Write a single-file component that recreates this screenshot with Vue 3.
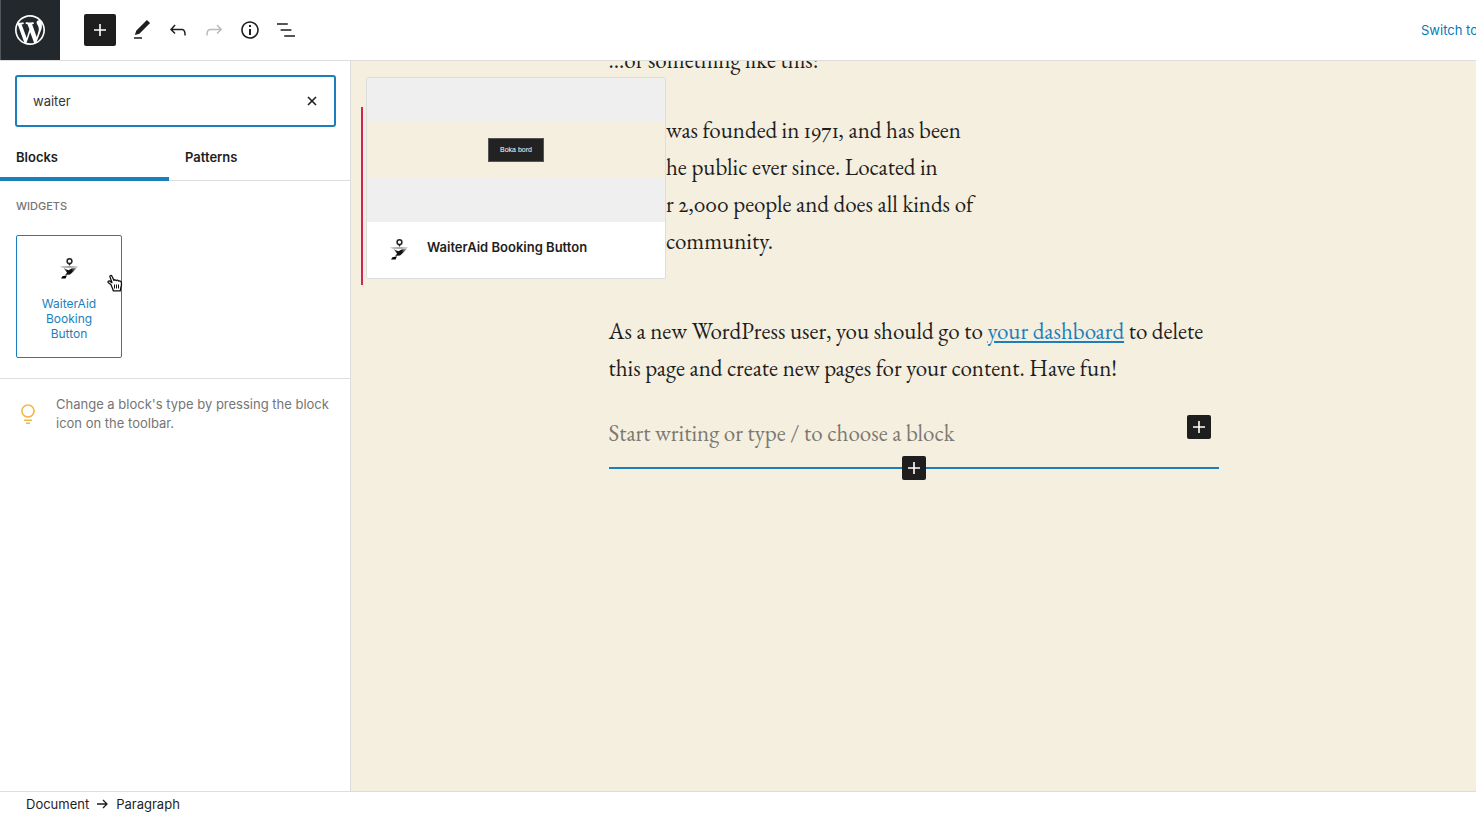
<script setup>
import { ref } from 'vue'

const query = ref('waiter')

const tools = [
  { label: 'Edit', d: 'M20.1 5.1L16.9 2 6.2 12.7l-1.3 4.4 4.5-1.3L20.1 5.1zM4 20.8h8v-1.5H4v1.5z' },
  { label: 'Undo', d: 'M18.3 11.7c-.6-.6-1.4-.9-2.3-.9H6.7l2.9-3.3-1.1-1-4.5 5L8.5 16l1-1-2.7-2.7H16c.5 0 .9.2 1.3.5 1 1 1 3.4 1 4.5v.3h1.5v-.2c0-1.5 0-4.3-1.5-5.7z' },
  { label: 'Redo', disabled: true, d: 'M15.6 6.5l-1.1 1 2.9 3.3H8c-.9 0-1.7.3-2.3.9-1.4 1.5-1.4 4.2-1.4 5.6v.2h1.5v-.3c0-1.1 0-3.5 1-4.5.3-.3.7-.5 1.3-.5h9.2L14.5 15l1.1 1.1 4.6-4.6-4.6-5z' },
  { label: 'Details', d: 'M12 3.2c-4.8 0-8.8 3.9-8.8 8.8 0 4.8 3.9 8.8 8.8 8.8 4.8 0 8.8-3.9 8.8-8.8 0-4.8-4-8.8-8.8-8.8zm0 16c-4 0-7.2-3.3-7.2-7.2C4.8 8 8 4.8 12 4.8s7.2 3.3 7.2 7.2c0 4-3.2 7.2-7.2 7.2zM11 17h2v-6h-2v6zm0-8h2V7h-2v2z' },
  { label: 'List view', d: 'M13.8 5.2H3v1.5h10.8V5.2zm-3.6 12v1.5H21v-1.5H10.2zm7.2-6H6.6v1.5h10.8v-1.5z' },
]
const plus = 'M18 11.2h-5.2V6h-1.6v5.2H6v1.6h5.2V18h1.6v-5.2H18z'

const quoteLines = [
  'was founded in 1971, and has been',
  'he public ever since. Located in',
  'r 2,000 people and does all kinds of',
  'community.',
]
</script>

<template>
  <div class="app">
    <header class="topbar">
      <a class="logo" href="#" aria-label="View Pages">
        <svg viewBox="-2 -2 24 24" width="36" height="36"><path fill="#fff" d="M20 10c0-5.51-4.49-10-10-10C4.48 0 0 4.49 0 10c0 5.52 4.48 10 10 10 5.51 0 10-4.48 10-10zM7.78 15.37L4.37 6.22c.55-.02 1.17-.08 1.17-.08.5-.06.44-1.13-.06-1.11 0 0-1.45.11-2.37.11-.18 0-.37 0-.58-.01C4.12 2.69 6.87 1.11 10 1.11c2.33 0 4.45.87 6.05 2.34-.68-.11-1.65.39-1.65 1.58 0 .74.45 1.36.9 2.1.35.61.55 1.36.55 2.46 0 1.49-1.4 5-1.4 5l-3.03-8.37c.54-.02.82-.17.82-.17.5-.05.44-1.25-.06-1.22 0 0-1.44.12-2.38.12-.87 0-2.33-.12-2.33-.12-.5-.03-.56 1.2-.06 1.22l.92.08 1.26 3.41zM17.41 10c.24-.64.74-1.87.43-4.25.7 1.29 1.05 2.71 1.05 4.25 0 3.29-1.73 6.24-4.4 7.78.97-2.59 1.94-5.2 2.92-7.78zM6.1 18.09C3.12 16.65 1.11 13.53 1.11 10c0-1.3.23-2.48.72-3.59C3.25 10.3 4.67 14.2 6.1 18.09zm4.03-6.63l2.58 6.98c-.86.29-1.76.45-2.71.45-.79 0-1.57-.11-2.29-.33.81-2.38 1.62-4.74 2.42-7.1z" /></svg>
      </a>
      <button class="dark add" aria-label="Add block"><svg viewBox="0 0 24 24" width="24" height="24"><path :d="plus" /></svg></button>
      <div class="tools">
        <button v-for="t in tools" :key="t.label" class="tool" :disabled="t.disabled" :aria-label="t.label">
          <svg viewBox="0 0 24 24" width="24" height="24"><path :d="t.d" /></svg>
        </button>
      </div>
      <a class="switch" href="#">Switch to</a>
    </header>

    <div class="main">
      <aside class="sidebar">
        <div class="search">
          <input v-model="query" type="text" aria-label="Search for a block" />
          <button class="clear" aria-label="Clear search" @click="query = ''">
            <svg viewBox="0 0 10 10" width="10" height="10"><path d="M1 1l8 8M9 1l-8 8" fill="none" stroke="#1e1e1e" stroke-width="1.6" /></svg>
          </button>
        </div>
        <div class="tabs" role="tablist">
          <button class="tab active" role="tab" aria-selected="true">Blocks</button>
          <button class="tab" role="tab" aria-selected="false">Patterns</button>
        </div>
        <section class="results">
          <h2>WIDGETS</h2>
          <button class="card">
            <svg class="waiter" viewBox="0 0 20 22" width="20" height="22">
              <use href="#waiter-mark" />
            </svg>
            <span>WaiterAid Booking Button</span>
            <svg class="cursor" viewBox="0 0 16 18" width="16" height="18">
              <path d="M4 10.800L1.500 8.800C.4 7.700 1.800 6.400 2.900 7.100L5 8.600 3 3C2.500 1.500 4.400.8 5 2.200L7 6.500c.3-1 1.900-1 2.300.2.500-.9 2-.7 2.300.5.800-.7 2.600-.1 2.700 1 .3 1.700.4 3.400-.5 5.300L13.300 16.800H6.300c-.3-1.800-1.300-3.800-2.300-6z" fill="#fff" stroke="#111" stroke-width="1.300" stroke-linejoin="round" />
              <path d="M7.500 10.500v4M9.500 10.500v4M11.500 10.500v4" stroke="#111" stroke-width="1" />
            </svg>
          </button>
        </section>
        <div class="tip">
          <svg viewBox="0 0 24 24" width="24" height="24"><path fill="#f0b849" d="M12 15.800c-3.700 0-6.800-3-6.800-6.800s3-6.800 6.800-6.800c3.700 0 6.800 3 6.800 6.800s-3.100 6.800-6.800 6.800zm0-12C9.100 3.800 6.800 6.100 6.800 9s2.400 5.200 5.200 5.200c2.900 0 5.200-2.400 5.200-5.200S14.900 3.800 12 3.800zM8 17.500h8V19H8zM10 20.500h4V22h-4z" /></svg>
          <p>Change a block's type by pressing the block icon on the toolbar.</p>
        </div>
      </aside>

      <main class="canvas">
        <p class="column intro">…or something like this:</p>
        <blockquote>
          <div v-for="line in quoteLines" :key="line">{{ line }}</div>
        </blockquote>
        <p class="column">As a new WordPress user, you should go to <a href="#">your dashboard</a> to delete this page and create new pages for your content. Have fun!</p>
        <div class="column writer">
          <input type="text" aria-label="Paragraph text" placeholder="Start writing or type / to choose a block" />
          <button class="dark" aria-label="Add block"><svg viewBox="0 0 24 24" width="24" height="24"><path :d="plus" /></svg></button>
        </div>
        <div class="column insertion">
          <button class="dark" aria-label="Insert block here"><svg viewBox="0 0 24 24" width="24" height="24"><path :d="plus" /></svg></button>
        </div>

        <div class="preview">
          <div class="stage"><div class="band"><span class="booking">Boka bord</span></div></div>
          <div class="caption">
            <svg class="waiter" viewBox="0 0 20 22" width="20" height="22">
              <defs>
                <linearGradient id="tray" x1="0" x2="1"><stop offset="0" stop-color="#ccc" /><stop offset=".5" stop-color="#888" /><stop offset="1" stop-color="#ccc" /></linearGradient>
                <linearGradient id="hand" x1="0" x2="1"><stop offset="0" stop-color="#777" /><stop offset=".3" stop-color="#111" /><stop offset=".6" stop-color="#111" /><stop offset="1" stop-color="#ccc" /></linearGradient>
                <g id="waiter-mark">
                  <circle cx="10.500" cy="3.200" r="2.400" fill="none" stroke="#222" stroke-width="1.500" />
                  <path d="M9 5h3l-1.500 3z" fill="#222" />
                  <path d="M1 8.200h18l-1.500 1.600H3z" fill="url(#tray)" />
                  <path d="M4.500 9.800l2.500 1.400 2.500 1 3-1.600 5.500-.8-3.500 3.700-3.500 3-5 .5 2-2.200z" fill="url(#hand)" />
                  <path d="M2 20.500l1.500-2.300 4.500-1-1.500 3.200z" fill="#000" />
                </g>
              </defs>
              <use href="#waiter-mark" />
            </svg>
            <strong>WaiterAid Booking Button</strong>
          </div>
        </div>
      </main>
    </div>

    <footer>
      <button>Document</button>
      <svg viewBox="0 0 11 10" width="11" height="10"><path d="M0 5h9.500M6 1l4 4-4 4" fill="none" stroke="#1e1e1e" stroke-width="1.300" /></svg>
      <button>Paragraph</button>
    </footer>
  </div>
</template>

<style>
body { margin: 0; overflow: hidden; }
</style>

<style scoped>
.app { display: flex; flex-direction: column; height: 100vh; background: #fff; color: #1e1e1e; font: 13px/19px Inter, "Liberation Sans", sans-serif; }
.app * { box-sizing: border-box; }
button, input { font: inherit; color: inherit; }
button { display: flex; align-items: center; justify-content: center; padding: 0; border: 0; background: none; }
svg { display: block; flex: none; }
p, h2, blockquote { margin: 0; }

.topbar { display: flex; flex: none; align-items: center; overflow: hidden; border-bottom: 1px solid #ddd; }
.logo { display: flex; align-items: center; justify-content: center; width: 60px; height: 60px; background: #23282d; box-shadow: inset 1px 0 #50575e; }
.dark { width: 24px; height: 24px; border-radius: 2px; background: #1e1e1e; fill: #fff; }
.add { width: 32px; height: 32px; margin: 0 8px 0 24px; }
.tools { display: flex; }
.tool { width: 36px; height: 36px; fill: #1e1e1e; }
.tool:disabled { fill: #bbb; }
.switch { flex: 0 0 55px; min-width: 0; margin-left: auto; white-space: nowrap; color: #007cba; text-decoration: none; }

.main { display: flex; flex: 1; min-height: 0; }
.sidebar { flex: none; width: 351px; border-right: 1px solid #ddd; }
.search { display: flex; margin: 14px 14px 6px 15px; height: 52px; border: 2px solid #1c7fbd; border-radius: 3px; }
.search input { flex: 1; min-width: 0; padding: 0 16px; border: 0; outline: 0; background: none; color: #32373c; }
.clear { width: 44px; }
.tabs { display: flex; border-bottom: 1px solid #ddd; }
.tab { justify-content: flex-start; width: 169px; height: 48px; margin-bottom: -1px; padding: 0 16px; font-weight: 600; }
.active { box-shadow: inset 0 -4px #1c7fbd; }
.results { padding: 16px 16px 20px; border-bottom: 1px solid #ddd; }
h2 { font-size: 11px; font-weight: 500; color: #757575; }
.card { position: relative; flex-direction: column; gap: 16px; width: 106px; height: 123px; margin-top: 19px; padding: 6px 16px 0; border: 1px solid #1c7fbd; border-radius: 2px; font-size: 12px; line-height: 15px; color: #1c7fbd; }
.cursor { position: absolute; top: 38px; right: -2px; }
.tip { display: flex; gap: 16px; align-items: center; padding: 16px; color: #757575; }

.canvas { position: relative; flex: 1; min-width: 0; overflow: hidden; padding: 0 10px; background: #f5efe0; font: 23px/37px "EB Garamond", "Liberation Serif", serif; font-variant-numeric: oldstyle-nums proportional-nums; }
.column { max-width: 610px; margin-left: auto; margin-right: auto; }
.column a { color: #1c7fbd; text-decoration-thickness: 2px; text-underline-offset: 2px; }
.intro { margin-top: -19px; }
blockquote { height: 178px; margin: 28px 0; padding: 5px 0 0 303px; border-left: 2px solid #cd2653; white-space: nowrap; }
.writer { display: flex; margin-top: 28px; padding-right: 8px; }
.writer input { flex: 1; min-width: 0; height: 37px; padding: 0; border: 0; outline: 0; background: none; }
.writer input::placeholder { color: #7c7970; opacity: 1; }
.insertion { display: flex; justify-content: center; margin-top: 4px; background: linear-gradient(#1c7fbd, #1c7fbd) center / 100% 2px no-repeat; }

.preview { position: absolute; top: 16px; left: 15px; width: 300px; border: 1px solid #ddd; border-radius: 2px; background: #fff; font: 13px/19px Inter, "Liberation Sans", sans-serif; }
.stage { padding: 44px 0; background: #efefef; }
.band { display: flex; align-items: center; justify-content: center; height: 56px; background: #f5efe0; }
.booking { padding: 0 11px; border: 1px solid #555; background: #222; color: #fff; font: 7px/22px "Liberation Sans", sans-serif; }
.caption { display: flex; align-items: center; gap: 18px; height: 56px; padding: 0 22px; }
.caption strong { padding-bottom: 5px; font-weight: 600; }

footer { display: flex; flex: none; align-items: center; gap: 8px; height: 25px; padding: 0 26px; border-top: 1px solid #ddd; }
</style>
